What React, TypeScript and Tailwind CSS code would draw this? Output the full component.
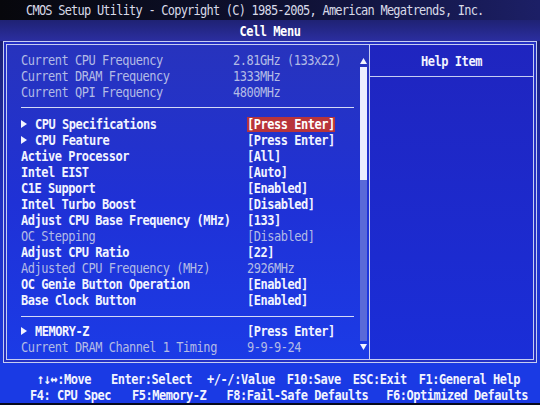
import clsx from "clsx";

type Row = {
  label: string;
  value: string;
  sub?: boolean;
  muted?: boolean;
  selected?: boolean;
};

const info: Row[] = [
  { label: "Current CPU Frequency", value: "2.81GHz (133x22)", muted: true },
  { label: "Current DRAM Frequency", value: "1333MHz", muted: true },
  { label: "Current QPI Frequency", value: "4800MHz", muted: true },
];

const cpuRows: Row[] = [
  { label: "CPU Specifications", value: "[Press Enter]", sub: true, selected: true },
  { label: "CPU Feature", value: "[Press Enter]", sub: true },
  { label: "Active Processor", value: "[All]" },
  { label: "Intel EIST", value: "[Auto]" },
  { label: "C1E Support", value: "[Enabled]" },
  { label: "Intel Turbo Boost", value: "[Disabled]" },
  { label: "Adjust CPU Base Frequency (MHz)", value: "[133]" },
  { label: "OC Stepping", value: "[Disabled]", muted: true },
  { label: "Adjust CPU Ratio", value: "[22]" },
  { label: "Adjusted CPU Frequency (MHz)", value: "2926MHz", muted: true },
  { label: "OC Genie Button Operation", value: "[Enabled]" },
  { label: "Base Clock Button", value: "[Enabled]" },
];

const memRows: Row[] = [
  { label: "MEMORY-Z", value: "[Press Enter]", sub: true },
  { label: "Current DRAM Channel 1 Timing", value: "9-9-9-24", muted: true },
];

// bitmap fonts are taller than they are wide, so stretch the glyphs a little
function Txt({ children, className }: { children: React.ReactNode; className?: string }) {
  return (
    <span className={clsx("inline-block leading-[12px] scale-y-[1.22] whitespace-pre", className)}>{children}</span>
  );
}

function Arrow({ dir, className }: { dir: "up" | "down" | "right"; className?: string }) {
  const pts = dir === "up" ? "0,6 3.5,0 7,6" : dir === "down" ? "0,0 7,0 3.5,6" : "0,0 6,4 0,8";
  const w = dir === "right" ? 6 : 7;
  const h = dir === "right" ? 8 : 6;
  return (
    <svg width={w} height={h} viewBox={`0 0 ${w} ${h}`} className={className}>
      <polygon points={pts} fill="#f2f4ff" />
    </svg>
  );
}

function Line({ row, labelWidth }: { row: Row; labelWidth: string }) {
  const tone = row.muted ? "text-[#b3bbe6] font-normal" : "text-[#f2f4ff] font-bold";
  return (
    <div className={clsx("h-[16px] flex items-center", tone)}>
      <div className={clsx("flex items-center shrink-0", labelWidth)}>
        {row.sub && <Arrow dir="right" className="mr-[8px]" />}
        <Txt>{row.label}</Txt>
      </div>
      <div className={clsx("h-[15px] flex items-center", row.selected && "bg-[#b8343a] text-white")}>
        <Txt>{row.value}</Txt>
      </div>
    </div>
  );
}

export default function App() {
  return (
    <div className="w-[540px] h-[405px] overflow-hidden flex flex-col bg-gradient-to-b from-[#1a1c62] via-[#2030c0] to-[#1a3ae0] font-['DejaVu_Sans_Mono',monospace] text-[12px] tracking-[-0.47px]">
      {/* title bar */}
      <div className="h-[20px] shrink-0 flex items-center pl-[26px] bg-gradient-to-r from-[#07070c] via-[#0e1030] to-[#1c1f66] text-[#d8dae8] tracking-[-0.78px]">
        <Txt>CMOS Setup Utility - Copyright (C) 1985-2005, American Megatrends, Inc.</Txt>
      </div>
      <div className="h-[21px] shrink-0 flex items-center justify-center bg-gradient-to-b from-[#1f2274] to-[#2b2ea0] text-white font-bold">
        <Txt>Cell Menu</Txt>
      </div>

      {/* main frame, double rule */}
      <div className="mx-[3px] h-[322px] shrink-0 border border-[#c6cdf2] p-[2px] bg-[#2430c4]">
        <div className="h-full border border-[#c6cdf2] flex">
          <div className="w-[362px] flex bg-gradient-to-b from-[#2733bd] via-[#1f31d6] to-[#1b3be6]">
            <div className="flex-1 pl-[14px] pt-[7px]">
              {info.map((r) => (
                <Line key={r.label} row={r} labelWidth="w-[212px]" />
              ))}
              <div className="mt-[7px] mb-[8px] h-px w-[333px] bg-[#d4daf6]" />
              {cpuRows.map((r) => (
                <Line key={r.label} row={r} labelWidth="w-[226px]" />
              ))}
              <div className="mt-[8px] mb-[6px] h-px w-[333px] bg-[#d4daf6]" />
              {memRows.map((r) => (
                <Line key={r.label} row={r} labelWidth="w-[226px]" />
              ))}
            </div>

            {/* scroll bar */}
            <div className="w-[7px] mr-[2px] pt-[10px] flex flex-col">
              <div className="h-[12px] flex items-center justify-center">
                <Arrow dir="up" />
              </div>
              <div className="h-[274px] flex flex-col bg-[#5a6ad8]">
                <div className="h-[113px] bg-[#eceeff]" />
              </div>
              <div className="h-[11px] flex items-center justify-center">
                <Arrow dir="down" />
              </div>
            </div>
          </div>

          <div className="w-px bg-[#c6cdf2]" />

          {/* help column */}
          <div className="flex-1 flex flex-col bg-gradient-to-b from-[#1f25bf] to-[#1a2ed8]">
            <div className="h-[31px] flex items-center justify-center text-[#f2f4ff] font-bold">
              <Txt>Help Item</Txt>
            </div>
            <div className="h-px bg-[#c6cdf2]" />
          </div>
        </div>
      </div>

      {/* key legend */}
      <div className="flex-1 bg-[#1a3ae4] border-b-[2px] border-[#080a1c] pt-[8px] text-[#f2f4ff] font-bold">
        <div className="h-[16px] flex items-center pl-[37px]">
          <Txt>↑↓↔:Move</Txt>
          <Txt className="ml-[20px]">Enter:Select</Txt>
          <Txt className="ml-[15px]">+/-/:Value</Txt>
          <Txt className="ml-[12px]">F10:Save</Txt>
          <Txt className="ml-[12px]">ESC:Exit</Txt>
          <Txt className="ml-[12px]">F1:General Help</Txt>
        </div>
        <div className="h-[16px] flex items-center pl-[30px]">
          <Txt>F4: CPU Spec</Txt>
          <Txt className="ml-[21px]">F5:Memory-Z</Txt>
          <Txt className="ml-[20px]">F8:Fail-Safe Defaults</Txt>
          <Txt className="ml-[18px]">F6:Optimized Defaults</Txt>
        </div>
      </div>
    </div>
  );
}
